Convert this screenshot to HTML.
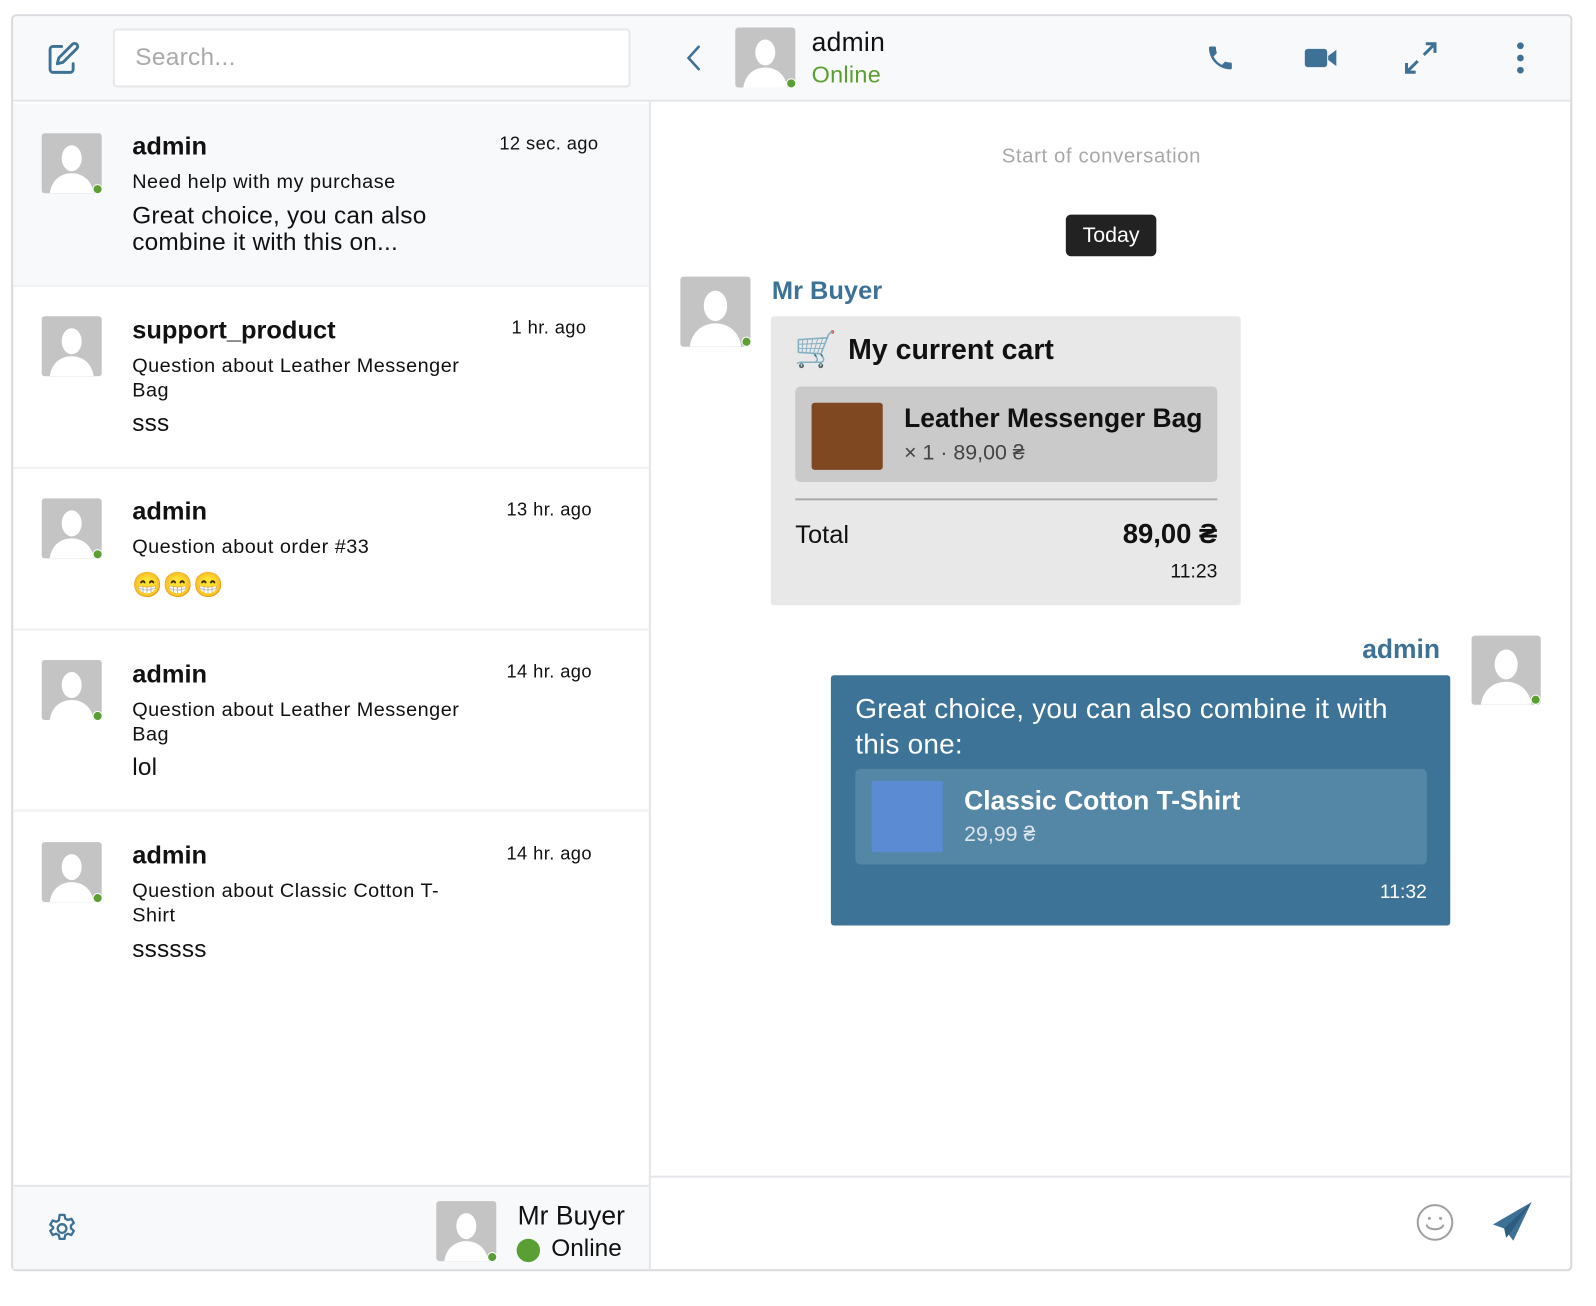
<!DOCTYPE html>
<html><head><meta charset="utf-8"><style>
*{box-sizing:border-box;margin:0;padding:0}
body{width:1596px;height:1284px;background:#fff;font-family:"Liberation Sans","DejaVu Sans",sans-serif;position:relative;overflow:hidden;color:#111}
#w{position:absolute;left:0;top:0;width:1596px;height:1284px;transform:scale(1.017);transform-origin:0 0}
.a{position:absolute}
.box{left:11px;top:14px;width:1535px;height:1236px;border:2px solid #d9d9de;border-radius:5px}
.av{position:absolute;background:#c4c4c4;border-radius:3px;overflow:hidden}
.av svg{position:absolute;left:0;top:0;width:100%;height:100%}
.dot{position:absolute;width:10px;height:10px;border-radius:50%;background:#5a9f33;border:1.5px solid #fff}
.nm{font-size:25px;font-weight:bold;line-height:30px}
.sub{font-size:19.5px;line-height:24px;letter-spacing:.5px}
.msg{font-size:24px;line-height:26px;letter-spacing:.2px}
.tm{font-size:18px;letter-spacing:.4px}
.sep{left:13px;width:625px;height:2px;background:#f0f0f2}
</style></head><body><div id="w">
<div class="a box"></div>
<div class="a" style="left:13px;top:16px;width:1531px;height:84px;background:#f8f9fb;border-bottom:2px solid #e4e5e8;border-radius:4px 4px 0 0"></div>
<svg class="a" style="left:45px;top:40px" width="34" height="34" viewBox="0 0 24 24" fill="none" stroke="#3d7196" stroke-width="2" stroke-linecap="round" stroke-linejoin="round"><path d="M11 4H5a2 2 0 0 0-2 2v14a2 2 0 0 0 2 2h12a2 2 0 0 0 2-2v-4"/><path d="M18.5 2.5a2.1 2.1 0 0 1 3 3L12 15l-4 1 1-4z"/></svg>
<div class="a" style="left:111px;top:28px;width:509px;height:58px;background:#fff;border:2px solid #e8e8ea;border-radius:4px;font-size:24px;color:#aaa;padding:13px 20px;letter-spacing:.3px">Search...</div>
<svg class="a" style="left:672px;top:44px" width="22" height="26" viewBox="0 0 22 26" fill="none" stroke="#3d7196" stroke-width="2.5" stroke-linecap="round"><path d="M15 2L5 13l10 11"/></svg>
<div class="av" style="left:723px;top:27px;width:59px;height:59px"><svg viewBox="0 0 60 60"><ellipse cx="30" cy="25" rx="10" ry="13" fill="#fff"/><path d="M8 60c2-14 12-20 22-20s20 6 22 20z" fill="#fff"/></svg></div>
<div class="dot" style="left:773px;top:77px"></div>
<div class="a" style="left:798px;top:26px;font-size:26px;letter-spacing:.3px">admin</div>
<div class="a" style="left:798px;top:60px;font-size:23px;color:#5a9f2e;letter-spacing:.3px">Online</div>
<svg class="a" style="left:1185px;top:42px" width="30" height="30" viewBox="0 0 24 24"><path fill="#3d7196" d="M6.6 10.8c1.4 2.8 3.8 5.1 6.6 6.6l2.2-2.2c.3-.3.7-.4 1-.2 1.1.4 2.3.6 3.6.6.6 0 1 .4 1 1V20c0 .6-.4 1-1 1C10.6 21 3 13.4 3 4c0-.6.4-1 1-1h3.5c.6 0 1 .4 1 1 0 1.3.2 2.5.6 3.6.1.3 0 .7-.2 1z"/></svg>
<svg class="a" style="left:1282px;top:43px" width="34" height="26" viewBox="0 0 34 26"><rect x="1" y="5" width="22" height="18" rx="3" fill="#3d7196"/><path d="M24 12l8-6v16l-8-6z" fill="#3d7196"/></svg>
<svg class="a" style="left:1380px;top:40px" width="34" height="34" viewBox="0 0 34 34" fill="none" stroke="#3d7196" stroke-width="3"><path d="M20 14L31 3M22 3h9v9M14 20L3 31M3 22v9h9"/></svg>
<svg class="a" style="left:1488px;top:40px" width="14" height="34" viewBox="0 0 14 34" fill="#3d7196"><circle cx="7" cy="5" r="3.3"/><circle cx="7" cy="17" r="3.3"/><circle cx="7" cy="29" r="3.3"/></svg>
<div class="a" style="left:638px;top:100px;width:2px;height:1149px;background:#e4e5e8"></div>
<div class="a" style="left:13px;top:102px;width:625px;height:179px;background:#f8f9fb"></div>
<div class="a sep" style="top:280px"></div>
<div class="a sep" style="top:459px"></div>
<div class="a sep" style="top:618px"></div>
<div class="a sep" style="top:796px"></div>

<div class="av" style="left:41px;top:131px;width:59px;height:59px"><svg viewBox="0 0 60 60"><ellipse cx="30" cy="25" rx="10" ry="13" fill="#fff"/><path d="M8 60c2-14 12-20 22-20s20 6 22 20z" fill="#fff"/></svg></div>
<div class="dot" style="left:91px;top:181px"></div>
<div class="a nm" style="left:130px;top:129px">admin</div>
<div class="a tm" style="left:491px;top:131px">12 sec. ago</div>
<div class="a sub" style="left:130px;top:167px">Need help with my purchase</div>
<div class="a msg" style="left:130px;top:200px">Great choice, you can also<br>combine it with this on...</div>

<div class="av" style="left:41px;top:311px;width:59px;height:59px"><svg viewBox="0 0 60 60"><ellipse cx="30" cy="25" rx="10" ry="13" fill="#fff"/><path d="M8 60c2-14 12-20 22-20s20 6 22 20z" fill="#fff"/></svg></div>
<div class="a nm" style="left:130px;top:310px">support_product</div>
<div class="a tm" style="left:503px;top:312px">1 hr. ago</div>
<div class="a sub" style="left:130px;top:348px">Question about Leather Messenger<br>Bag</div>
<div class="a msg" style="left:130px;top:404px">sss</div>

<div class="av" style="left:41px;top:490px;width:59px;height:59px"><svg viewBox="0 0 60 60"><ellipse cx="30" cy="25" rx="10" ry="13" fill="#fff"/><path d="M8 60c2-14 12-20 22-20s20 6 22 20z" fill="#fff"/></svg></div>
<div class="dot" style="left:91px;top:540px"></div>
<div class="a nm" style="left:130px;top:488px">admin</div>
<div class="a tm" style="left:498px;top:491px">13 hr. ago</div>
<div class="a sub" style="left:130px;top:526px">Question about order #33</div>
<div class="a" style="left:130px;top:561px;font-size:24px;font-family:'Noto Color Emoji','DejaVu Sans',sans-serif">😁😁😁</div>

<div class="av" style="left:41px;top:649px;width:59px;height:59px"><svg viewBox="0 0 60 60"><ellipse cx="30" cy="25" rx="10" ry="13" fill="#fff"/><path d="M8 60c2-14 12-20 22-20s20 6 22 20z" fill="#fff"/></svg></div>
<div class="dot" style="left:91px;top:699px"></div>
<div class="a nm" style="left:130px;top:648px">admin</div>
<div class="a tm" style="left:498px;top:650px">14 hr. ago</div>
<div class="a sub" style="left:130px;top:686px">Question about Leather Messenger<br>Bag</div>
<div class="a msg" style="left:130px;top:742px">lol</div>

<div class="av" style="left:41px;top:828px;width:59px;height:59px"><svg viewBox="0 0 60 60"><ellipse cx="30" cy="25" rx="10" ry="13" fill="#fff"/><path d="M8 60c2-14 12-20 22-20s20 6 22 20z" fill="#fff"/></svg></div>
<div class="dot" style="left:91px;top:878px"></div>
<div class="a nm" style="left:130px;top:826px">admin</div>
<div class="a tm" style="left:498px;top:829px">14 hr. ago</div>
<div class="a sub" style="left:130px;top:864px">Question about Classic Cotton T-<br>Shirt</div>
<div class="a msg" style="left:130px;top:921px">ssssss</div>

<div class="a" style="left:13px;top:1165px;width:625px;height:83px;background:#f8f9fb;border-top:2px solid #e4e5e8"></div>
<svg class="a" style="left:44px;top:1191px" width="34" height="34" viewBox="0 0 24 24" fill="none" stroke="#3d7196" stroke-width="1.6" stroke-linejoin="round"><path d="M10.3 2.5h3.4l.5 2.6 1.8 1 2.5-.9 1.7 2.9-2 1.7v2.1l2 1.7-1.7 2.9-2.5-.9-1.8 1-.5 2.6h-3.4l-.5-2.6-1.8-1-2.5.9-1.7-2.9 2-1.7V11l-2-1.7 1.7-2.9 2.5.9 1.8-1z"/><circle cx="12" cy="12" r="3"/></svg>
<div class="av" style="left:429px;top:1181px;width:59px;height:59px"><svg viewBox="0 0 60 60"><ellipse cx="30" cy="25" rx="10" ry="13" fill="#fff"/><path d="M8 60c2-14 12-20 22-20s20 6 22 20z" fill="#fff"/></svg></div>
<div class="dot" style="left:479px;top:1231px"></div>
<div class="a" style="left:509px;top:1180px;font-size:26px">Mr Buyer</div>
<div class="a" style="left:508px;top:1218px;width:23px;height:23px;border-radius:50%;background:#5a9f33"></div>
<div class="a" style="left:542px;top:1214px;font-size:24px">Online</div>

<div class="a" style="left:985px;top:143px;font-size:20px;color:#a8a8a8;letter-spacing:.6px">Start of conversation</div>
<div class="a" style="left:1048px;top:211px;width:89px;height:41px;background:#222;border-radius:5px;color:#fff;font-size:21px;text-align:center;line-height:41px">Today</div>
<div class="av" style="left:669px;top:272px;width:69px;height:69px"><svg viewBox="0 0 60 60"><ellipse cx="30" cy="25" rx="10" ry="13" fill="#fff"/><path d="M8 60c2-14 12-20 22-20s20 6 22 20z" fill="#fff"/></svg></div>
<div class="dot" style="left:729px;top:331px"></div>
<div class="a" style="left:759px;top:272px;font-size:25px;font-weight:bold;color:#3d7196">Mr Buyer</div>
<div class="a" style="left:758px;top:311px;width:462px;height:284px;background:#e8e8e8;border-radius:3px"></div>
<div class="a" style="left:781px;top:324px;font-size:34px;line-height:40px;font-family:'Noto Color Emoji','DejaVu Sans',sans-serif">🛒</div>
<div class="a" style="left:834px;top:328px;font-size:28px;font-weight:bold">My current cart</div>
<div class="a" style="left:782px;top:380px;width:415px;height:94px;background:#cacaca;border-radius:5px"></div>
<div class="a" style="left:798px;top:396px;width:70px;height:66px;background:#804820;border-radius:3px"></div>
<div class="a" style="left:889px;top:396px;font-size:26px;font-weight:bold">Leather Messenger Bag</div>
<div class="a" style="left:889px;top:434px;font-size:21px;color:#444">× 1 · 89,00 ₴</div>
<div class="a" style="left:782px;top:490px;width:415px;height:2px;background:#aaa"></div>
<div class="a" style="left:782px;top:512px;font-size:25px">Total</div>
<div class="a" style="left:1000px;top:510px;width:197px;text-align:right;font-size:27px;font-weight:bold">89,00 ₴</div>
<div class="a" style="left:1000px;top:552px;width:197px;text-align:right;font-size:19px">11:23</div>

<div class="a" style="left:1200px;top:623px;width:216px;text-align:right;font-size:26px;font-weight:bold;color:#3d7196">admin</div>
<div class="av" style="left:1447px;top:625px;width:68px;height:68px"><svg viewBox="0 0 60 60"><ellipse cx="30" cy="25" rx="10" ry="13" fill="#fff"/><path d="M8 60c2-14 12-20 22-20s20 6 22 20z" fill="#fff"/></svg></div>
<div class="dot" style="left:1505px;top:683px"></div>
<div class="a" style="left:817px;top:664px;width:609px;height:246px;background:#3d7396;border-radius:3px"></div>
<div class="a" style="left:841px;top:679px;font-size:27.5px;line-height:35px;color:#fff;width:550px;letter-spacing:.2px">Great choice, you can also combine it with this one:</div>
<div class="a" style="left:841px;top:756px;width:562px;height:94px;background:#5486a5;border-radius:5px"></div>
<div class="a" style="left:857px;top:768px;width:70px;height:70px;background:#5b8bd3;border-radius:2px"></div>
<div class="a" style="left:948px;top:772px;font-size:26px;font-weight:bold;color:#fff">Classic Cotton T-Shirt</div>
<div class="a" style="left:948px;top:809px;font-size:21px;color:#dde4ea">29,99 ₴</div>
<div class="a" style="left:1300px;top:867px;width:103px;text-align:right;font-size:19px;color:#fff">11:32</div>

<div class="a" style="left:640px;top:1156px;width:904px;height:2px;background:#e4e5e8"></div>
<svg class="a" style="left:1392px;top:1183px" width="38" height="38" viewBox="0 0 38 38" fill="none" stroke="#a0a0a0" stroke-width="2"><circle cx="19" cy="19" r="17"/><circle cx="13.5" cy="15" r="1.5" fill="#a0a0a0" stroke="none"/><circle cx="24.5" cy="15" r="1.5" fill="#a0a0a0" stroke="none"/><path d="M11 22c2 5 14 5 16 0" stroke-linecap="round"/></svg>
<svg class="a" style="left:1466px;top:1180px" width="42" height="42" viewBox="0 0 42 42"><path d="M40 2L2 24l11 4 9 12z" fill="#3d7196"/><path d="M40 2L13 28l2 9 5-6z" fill="#2f5d7e"/></svg>
</div></body></html>
